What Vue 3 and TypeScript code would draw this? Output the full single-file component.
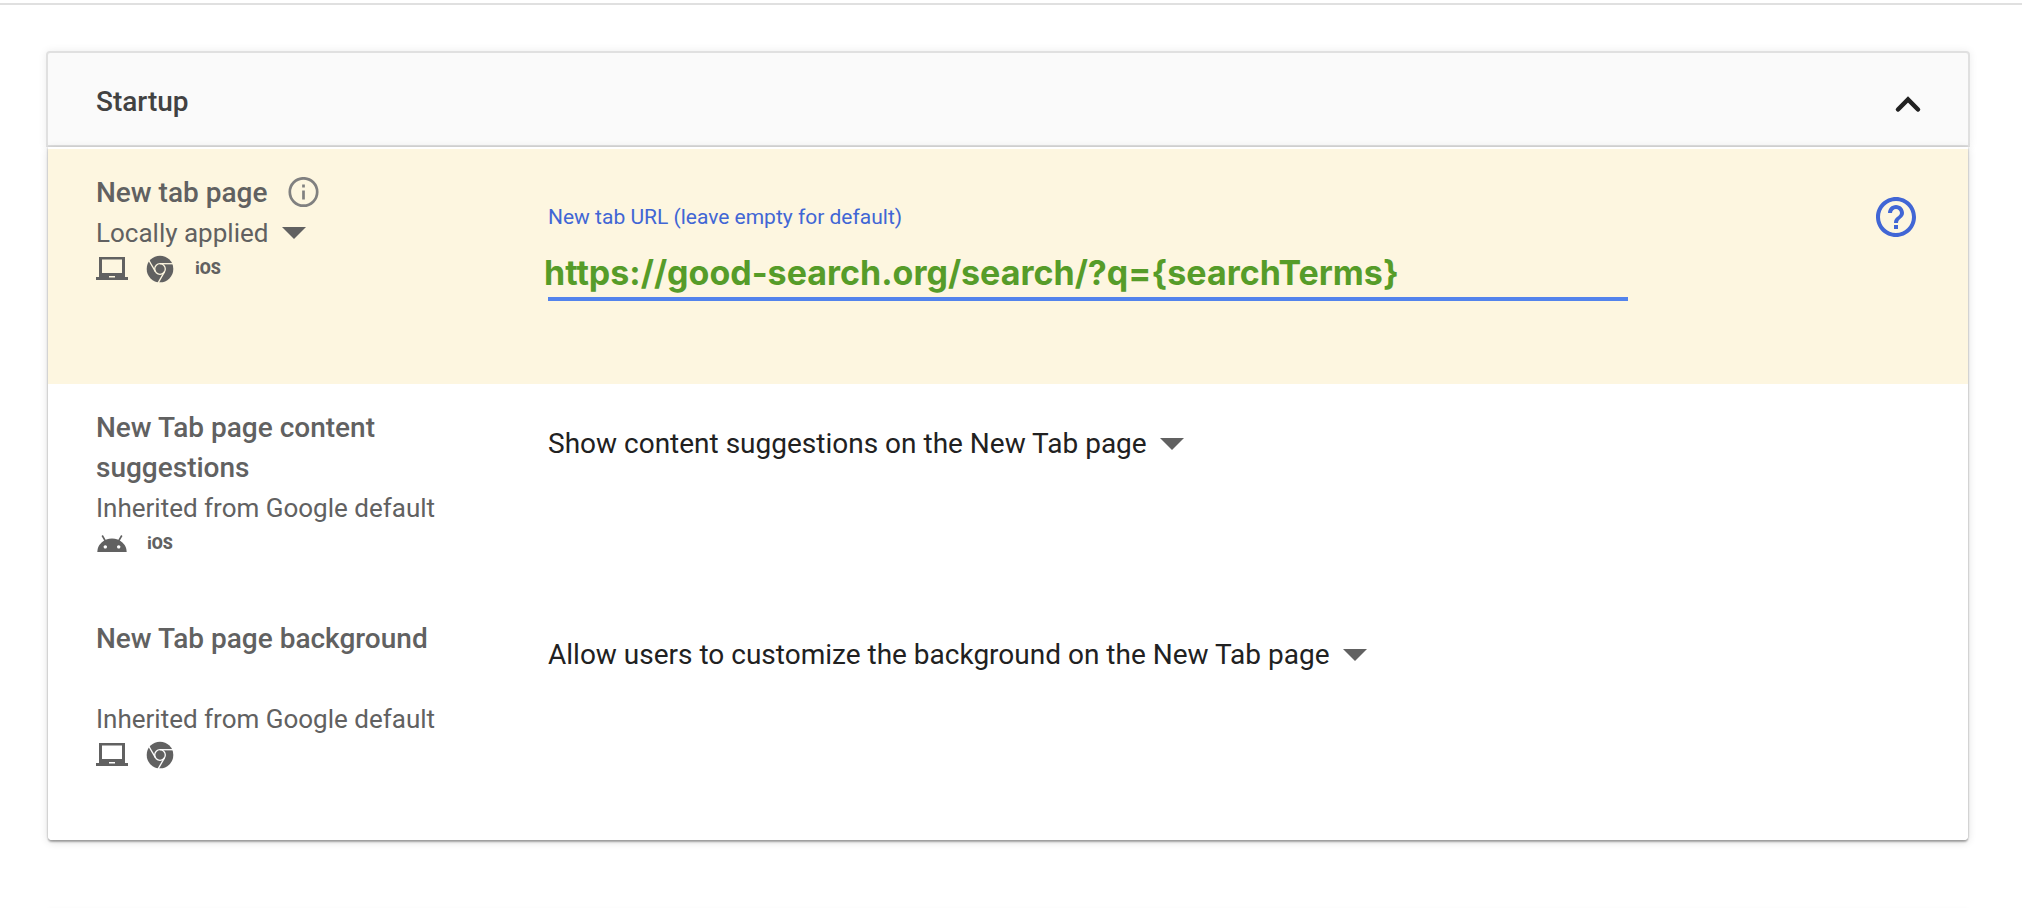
<script setup lang="ts">
import { ref } from 'vue'

type Platform = 'laptop' | 'chrome' | 'android' | 'ios'

interface Policy {
  id: string
  title: string
  source: string
  platforms: Platform[]
  value: string
}

const url = ref('https://good-search.org/search/?q={searchTerms}')
const open = ref(true)

const newTabPlatforms: Platform[] = ['laptop', 'chrome', 'ios']

const policies = ref<Policy[]>([
  {
    id: 'content-suggestions',
    title: 'New Tab page content suggestions',
    source: 'Inherited from Google default',
    platforms: ['android', 'ios'],
    value: 'Show content suggestions on the New Tab page',
  },
  {
    id: 'background',
    title: 'New Tab page background',
    source: 'Inherited from Google default',
    platforms: ['laptop', 'chrome'],
    value: 'Allow users to customize the background on the New Tab page',
  },
])
</script>

<template>
  <main class="page">
    <section class="card">
      <header class="card-header">
        <h2 class="card-title">Startup</h2>
        <button class="icon-button" type="button" aria-label="Toggle section" :aria-expanded="open" @click="open = !open">
          <svg class="chevron" viewBox="0 0 48 48" aria-hidden="true">
            <path d="M14 31.500 24 21.500 34 31.500" />
          </svg>
        </button>
      </header>

      <div class="card-body">
        <div class="row row-active">
          <div class="info">
            <div class="title-line">
              <label class="title" for="new-tab-url">New tab page</label>
              <button class="icon-button" type="button" aria-label="More information">
                <svg class="info-icon" viewBox="0 0 32 32" aria-hidden="true">
                  <circle cx="16.500" cy="15" r="13.700" />
                  <path d="M16.500 13.500v9M16.500 7.500v3" />
                </svg>
              </button>
            </div>
            <button class="source-button" type="button">
              <span>Locally applied</span>
              <svg class="arrow" viewBox="0 0 24 12" aria-hidden="true"><path d="M0 0h24L12 12z" /></svg>
            </button>
            <ul class="platforms">
              <li v-for="p in newTabPlatforms" :key="p" class="platform">
                <svg v-if="p === 'laptop'" viewBox="0 0 32 32" role="img" aria-label="Desktop">
                  <path fill-rule="evenodd" d="M3 4h26v20h3v3H0v-3h3zM6 6.500v13.500h20V6.500zM13 23v1.500h6V23z" />
                </svg>
                <svg v-else-if="p === 'chrome'" viewBox="0 0 32 32" role="img" aria-label="Chrome">
                  <circle cx="16" cy="16" r="13.300" />
                  <g class="cut">
                    <circle cx="16" cy="16" r="5.300" />
                    <path d="M16 10.700H29.500" />
                    <path d="M16 10.700H29.500" transform="rotate(120 16 16)" />
                    <path d="M16 10.700H29.500" transform="rotate(240 16 16)" />
                  </g>
                </svg>
                <span v-else class="ios">iOS</span>
              </li>
            </ul>
          </div>
          <div class="control field-area">
            <div class="field">
              <label class="field-label" for="new-tab-url">New tab URL (leave empty for default)</label>
              <input id="new-tab-url" v-model="url" class="field-input" type="text" spellcheck="false" />
              <div class="underline"></div>
            </div>
            <button class="icon-button" type="button" aria-label="Help">
              <svg class="help" viewBox="0 0 24 24" aria-hidden="true">
                <path d="M11 18h2v-2h-2v2zm1-16C6.480 2 2 6.480 2 12s4.480 10 10 10 10-4.480 10-10S17.520 2 12 2zm0 18c-4.410 0-8-3.590-8-8s3.590-8 8-8 8 3.590 8 8-3.590 8-8 8zm0-14c-2.210 0-4 1.790-4 4h2c0-1.100.9-2 2-2s2 .9 2 2c0 2-3 1.750-3 5h2c0-2.250 3-2.500 3-5 0-2.210-1.790-4-4-4z" />
              </svg>
            </button>
          </div>
        </div>

        <div v-for="policy in policies" :key="policy.id" class="row">
          <div class="info">
            <label class="title title-tall" :for="policy.id">{{ policy.title }}</label>
            <div class="source">{{ policy.source }}</div>
            <ul class="platforms">
              <li v-for="p in policy.platforms" :key="p" class="platform">
                <svg v-if="p === 'laptop'" viewBox="0 0 32 32" role="img" aria-label="Desktop">
                  <path fill-rule="evenodd" d="M3 4h26v20h3v3H0v-3h3zM6 6.500v13.500h20V6.500zM13 23v1.500h6V23z" />
                </svg>
                <svg v-else-if="p === 'chrome'" viewBox="0 0 32 32" role="img" aria-label="Chrome">
                  <circle cx="16" cy="16" r="13.300" />
                  <g class="cut">
                    <circle cx="16" cy="16" r="5.300" />
                    <path d="M16 10.700H29.500" />
                    <path d="M16 10.700H29.500" transform="rotate(120 16 16)" />
                    <path d="M16 10.700H29.500" transform="rotate(240 16 16)" />
                  </g>
                </svg>
                <svg v-else-if="p === 'android'" viewBox="0 0 32 32" role="img" aria-label="Android">
                  <path fill-rule="evenodd" d="M1.300 24A14.700 13.500 0 0 1 30.700 24zM9.300 17.200a1.700 1.700 0 1 0 .01 0zM22.700 17.200a1.700 1.700 0 1 0 .01 0z" />
                  <path class="antenna" d="M6.200 7.500 9.400 13M25.800 7.500 22.600 13" />
                </svg>
                <span v-else class="ios">iOS</span>
              </li>
            </ul>
          </div>
          <div class="control">
            <div class="picker">
              <select :id="policy.id" class="select">
                <option>{{ policy.value }}</option>
              </select>
              <svg class="arrow picker-arrow" viewBox="0 0 24 12" aria-hidden="true"><path d="M0 0h24L12 12z" /></svg>
            </div>
          </div>
        </div>
      </div>
    </section>
    <div class="next-card"></div>
  </main>
</template>

<style>
body {
  background: #fff;
}
</style>

<style scoped>
.page {
  box-sizing: border-box;
  min-height: 100vh;
  overflow: hidden;
  margin-top: 3px;
  margin-bottom: -3px;
  padding: 46px 52px 0 46px;
  border-top: 2px solid #e0e0e0;
  font-family: Roboto, "Liberation Sans", sans-serif;
  color: #616161;
}

.card {
  border-radius: 4px;
}

.card-header {
  display: flex;
  align-items: center;
  justify-content: space-between;
  box-sizing: border-box;
  height: 96px;
  padding: 5px 36px 0 48px;
  border: 2px solid #e0e0e0;
  border-radius: 4px 4px 0 0;
  background: #fafafa;
  box-shadow: 0 0 8px rgba(0, 0, 0, 0.08);
}

.card-title {
  margin: 0;
  font-size: 28px;
  line-height: 40px;
  font-weight: 500;
  color: #424242;
}

.card-body {
  position: relative;
  margin: 0 2px;
  padding-top: 2px;
  border-radius: 0 0 4px 4px;
  background: #fff;
  box-shadow: 0 2px 2px rgba(0, 0, 0, 0.3), 0 2px 8px rgba(0, 0, 0, 0.14), 0 0 2px rgba(0, 0, 0, 0.16);
}

.icon-button,
.source-button {
  display: flex;
  align-items: center;
  padding: 0;
  border: 0;
  background: none;
  color: inherit;
  font-family: inherit;
  cursor: pointer;
}

.chevron {
  width: 48px;
  height: 48px;
  fill: none;
  stroke: #212121;
  stroke-width: 4.5;
  stroke-linecap: round;
}

.row {
  --row-bg: #fff;
  display: flex;
  box-sizing: border-box;
  min-height: 211px;
  padding: 24px 48px 0;
  background: var(--row-bg);
}

.row-active {
  --row-bg: #fdf6e0;
  min-height: 235px;
}

.row:last-child {
  min-height: 245px;
  border-radius: 0 0 4px 4px;
}

.info {
  flex: 0 0 352px;
  margin-right: 96px;
}

.title-line {
  display: flex;
  align-items: center;
  gap: 20px;
}

.title {
  display: block;
  font-size: 28px;
  line-height: 40px;
  font-weight: 500;
}

.title-tall {
  min-height: 80px;
}

.info-icon {
  width: 32px;
  height: 32px;
  fill: none;
  stroke: #808080;
  stroke-width: 2.7;
}

.source,
.source-button {
  font-size: 26px;
  line-height: 40px;
}

.source-button {
  gap: 14px;
}

.arrow {
  width: 24px;
  height: 12px;
  fill: #616161;
}

.platforms {
  display: flex;
  gap: 16px;
  margin: 0;
  padding: 0;
  list-style: none;
}

.platform {
  display: flex;
  align-items: center;
  justify-content: center;
  width: 32px;
  height: 32px;
}

.platform svg {
  width: 32px;
  height: 32px;
  fill: #616161;
}

.cut {
  fill: none;
  stroke: var(--row-bg);
  stroke-width: 1.3;
}

.antenna {
  stroke: #616161;
  stroke-width: 1.6;
}

.ios {
  font-size: 16px;
  line-height: 32px;
  font-weight: 900;
}

.control {
  flex: 1;
  min-width: 0;
  padding: 16px 0 0 4px;
}

.field-area {
  display: flex;
  align-items: flex-start;
  justify-content: space-between;
  padding: 20px 0 0;
}

.field {
  flex: 0 1 1084px;
  padding-top: 12px;
}

.field-label {
  display: block;
  padding-left: 4px;
  font-size: 21px;
  line-height: 24px;
  color: #4166d5;
}

.field-input {
  display: block;
  box-sizing: border-box;
  width: 100%;
  margin: 20px 0 0;
  padding: 0;
  border: 0;
  outline: 0;
  background: none;
  font-family: Inter, Roboto, sans-serif;
  font-size: 34px;
  line-height: 48px;
  height: 48px;
  font-weight: 700;
  color: #569c29;
}

.underline {
  height: 4px;
  margin-left: 4px;
  background: #5383ec;
}

.help {
  width: 48px;
  height: 48px;
  fill: #4166d5;
}

.picker {
  position: relative;
  display: inline-block;
}

.select {
  display: block;
  appearance: none;
  height: 40px;
  margin: 0;
  padding: 0 36px 0 0;
  border: 0;
  background: none;
  font-family: inherit;
  font-size: 28px;
  line-height: 40px;
  color: #212121;
}

.picker-arrow {
  position: absolute;
  right: 0;
  top: 14px;
  pointer-events: none;
}

.next-card {
  height: 4px;
  margin: 71px 2px 0;
  box-shadow: 0 0 6px rgba(0, 0, 0, 0.08);
}
</style>
